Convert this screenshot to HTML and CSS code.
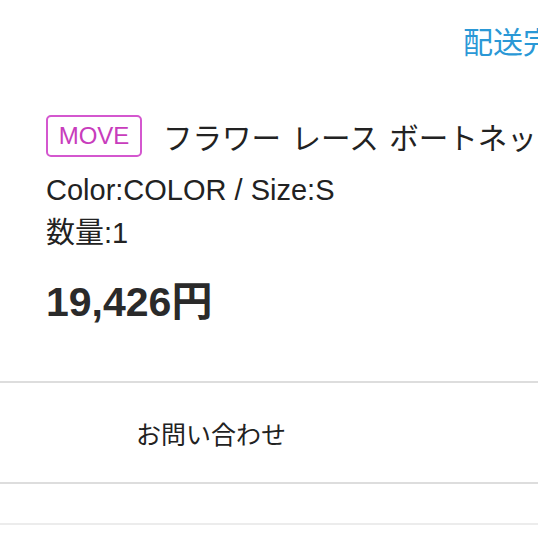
FILE: index.html
```html
<!DOCTYPE html>
<html lang="ja">
<head>
<meta charset="utf-8">
<link rel="stylesheet" href="styles.css">
</head>
<body>
<div class="page">
  <div class="status-row"><span class="status">配送完了</span></div>
  <div class="item">
    <div class="item-head">
      <span class="brand">MOVE</span>
      <span class="title">フラワー レース ボートネックワンピース</span>
    </div>
    <div class="meta">Color:COLOR / Size:S</div>
    <div class="meta">数量:1</div>
    <div class="price">19,426円</div>
  </div>
  <div class="contact"><span class="contact-label">お問い合わせ</span></div>
  <div class="spacer"></div>
</div>
</body>
</html>
```
FILE: styles.css
```css
html, body {
  margin: 0;
  padding: 0;
  background: #ffffff;
}
body {
  width: 538px;
  height: 538px;
  overflow: hidden;
  font-family: "Liberation Sans", "Noto Sans CJK JP", sans-serif;
  color: #222222;
}
.page {
  width: 538px;
}
.status-row {
  padding: 20px 0 0 463px;
  height: 40px;
  white-space: nowrap;
}
.status {
  font-family: "Noto Sans CJK JP", sans-serif;
  font-size: 30px;
  line-height: 40px;
  color: #2a98d6;
}
.item {
  padding: 55px 0 0 46px;
  white-space: nowrap;
}
.item-head {
  display: flex;
  align-items: center;
  height: 42px;
}
.brand {
  box-sizing: border-box;
  width: 96px;
  height: 42px;
  border: 2px solid #d457cf;
  border-radius: 5px;
  color: #c83cbc;
  font-family: "Liberation Sans", sans-serif;
  font-size: 24px;
  line-height: 38px;
  text-align: center;
  flex: none;
}
.title {
  margin-left: 21px;
  font-family: "Noto Sans CJK JP", sans-serif;
  font-size: 29.5px;
  line-height: 42px;
  word-spacing: 4px;
  color: #222222;
}
.meta {
  font-size: 29px;
  line-height: 43px;
  color: #222222;
}
.item-head + .meta {
  margin-top: 12px;
}
.price {
  margin-top: 22px;
  font-size: 41px;
  line-height: 50px;
  font-weight: bold;
  color: #2a2a2a;
}
.contact {
  margin-top: 54px;
  height: 99px;
  border-top: 2px solid #dddddd;
  border-bottom: 2px solid #dddddd;
  display: flex;
  align-items: center;
  padding-left: 136px;
}
.contact-label {
  font-family: "Noto Sans CJK JP", sans-serif;
  font-size: 25px;
  color: #222222;
}
.spacer {
  height: 39px;
  border-bottom: 2px solid #ececec;
}
```
